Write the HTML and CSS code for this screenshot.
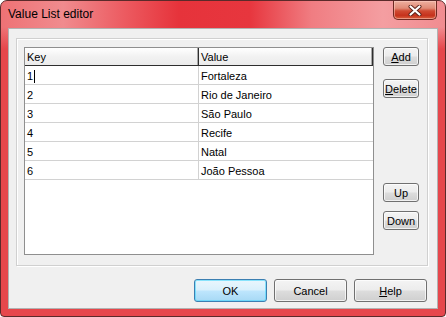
FILE: index.html
```html
<!DOCTYPE html>
<html lang="en">

<head>
    <meta charset="UTF-8">
    <title>Value List editor</title>
    <link rel="stylesheet" href="styles.css">
</head>

<body>
    <div class="window">
        <div class="titlebar">
            <span class="title">Value List editor</span>
            <button class="close">
                <svg width="14" height="11" viewBox="0 0 14 11">
                    <path d="M2.5 1.5 L11.5 9.5 M11.5 1.5 L2.5 9.5" stroke="#5a2018" stroke-width="4" stroke-linecap="round" />
                    <path d="M2.5 1.5 L11.5 9.5 M11.5 1.5 L2.5 9.5" stroke="#ffffff" stroke-width="2.2" stroke-linecap="round" />
                </svg>
            </button>
        </div>
        <div class="client">
            <div class="group">
                <div class="grid">
                    <div class="grid-head">
                        <div class="head-cell">Key</div>
                        <div class="head-cell">Value</div>
                    </div>
                    <div class="grid-row">
                        <div class="cell key">1<span class="caret"></span></div>
                        <div class="cell">Fortaleza</div>
                    </div>
                    <div class="grid-row">
                        <div class="cell key">2</div>
                        <div class="cell">Rio de Janeiro</div>
                    </div>
                    <div class="grid-row">
                        <div class="cell key">3</div>
                        <div class="cell">São Paulo</div>
                    </div>
                    <div class="grid-row">
                        <div class="cell key">4</div>
                        <div class="cell">Recife</div>
                    </div>
                    <div class="grid-row">
                        <div class="cell key">5</div>
                        <div class="cell">Natal</div>
                    </div>
                    <div class="grid-row">
                        <div class="cell key">6</div>
                        <div class="cell">João Pessoa</div>
                    </div>
                </div>
                <div class="side">
                    <button class="btn small"><u>A</u>dd</button>
                    <button class="btn small delete"><u>D</u>elete</button>
                    <button class="btn small up">Up</button>
                    <button class="btn small down">Down</button>
                </div>
            </div>
            <div class="actions">
                <button class="btn wide default">OK</button>
                <button class="btn wide">Cancel</button>
                <button class="btn wide"><u>H</u>elp</button>
            </div>
        </div>
    </div>
</body>

</html>
```

FILE: styles.css
```css
* {
    box-sizing: border-box;
}

body {
    margin: 0;
    padding: 0;
    background-color: #ffffff;
    font-family: "Liberation Sans", Arial, sans-serif;
}

.window {
    width: 446px;
    height: 317px;
    display: flex;
    flex-direction: column;
    padding: 0 7px 7px 7px;
    border: 1px solid #5b2a2a;
    border-radius: 7px 7px 4px 4px;
    background:
        linear-gradient(to bottom, rgba(232, 72, 76, 0) 0, rgba(232, 72, 76, 0) 26px, #e6474c 48px, #e6474c 100%),
        linear-gradient(90deg, #ee7275 0%, #f08b8e 14%, #ec5a60 28%, #e6333b 40%, #e7363e 56%, #f07d82 70%, #f49ea1 86%, #f18c90 100%);
}

.titlebar {
    height: 27px;
    display: flex;
    justify-content: space-between;
    align-items: flex-start;
}

.title {
    margin-top: 6px;
    font-size: 12px;
    line-height: 15px;
    color: #000000;
}

.close {
    width: 44px;
    height: 19px;
    margin-right: 1px;
    padding: 0;
    display: flex;
    align-items: center;
    justify-content: center;
    border: 1px solid #6e2a22;
    border-top: none;
    border-radius: 0 0 5px 5px;
    background: linear-gradient(to bottom, #eeb0a0 0%, #e08a76 40%, #cf4a32 55%, #c6321c 80%, #d8603e 100%);
    box-shadow: inset 0 0 0 1px rgba(255, 210, 200, 0.5);
}

.client {
    flex: 1;
    display: flex;
    flex-direction: column;
    padding: 9px 9px 0 7px;
    border: 1px solid #b2b2b2;
    background-color: #f0f0f0;
}

.group {
    height: 228px;
    display: flex;
    padding: 8px 9px 10px 7px;
    border: 1px solid #d0d0d0;
    box-shadow: inset 1px 1px 0 #ffffff, 1px 1px 0 #ffffff;
}

.grid {
    width: 350px;
    height: 208px;
    border: 1px solid #8f8f8f;
    background-color: #ffffff;
    font-size: 11px;
    color: #000000;
}

.grid-head,
.grid-row {
    display: grid;
    grid-template-columns: 174px 174px;
}

.grid-head {
    height: 18px;
    border-bottom: 1px solid #2e2e2e;
    background: linear-gradient(to bottom, #ffffff 0%, #f2f2f2 50%, #ebebeb 100%);
}

.head-cell {
    padding: 2px 0 0 2px;
    line-height: 14px;
    border-right: 1px solid #2e2e2e;
    box-shadow: inset -1px 0 0 #a8a8a8;
}

.grid-row {
    height: 19px;
    border-bottom: 1px solid #d2d2d2;
}

.cell {
    padding: 3px 0 0 2px;
    line-height: 14px;
    white-space: nowrap;
}

.cell.key {
    border-right: 1px solid #d2d2d2;
}

.caret {
    display: inline-block;
    width: 1px;
    height: 13px;
    margin-left: 1px;
    vertical-align: -3px;
    background-color: #000000;
}

.side {
    display: flex;
    flex-direction: column;
    margin-left: 9px;
}

.btn {
    padding: 0;
    font-family: "Liberation Sans", Arial, sans-serif;
    font-size: 11px;
    color: #000000;
    border: 1px solid #707070;
    border-radius: 3px;
    background: linear-gradient(to bottom, #f4f4f4 0%, #ececec 48%, #dddddd 52%, #cfcfcf 100%);
    box-shadow: inset 0 0 0 1px rgba(255, 255, 255, 0.7);
}

.btn.small {
    width: 36px;
    height: 19px;
}

.btn.delete {
    margin-top: 13px;
}

.btn.up {
    margin-top: 85px;
}

.btn.down {
    margin-top: 9px;
}

.actions {
    display: flex;
    justify-content: flex-end;
    gap: 7px;
    margin-top: 13px;
    padding-right: 1px;
}

.btn.wide {
    width: 73px;
    height: 23px;
}

.btn.default {
    border-color: #3c7fb1;
    background: linear-gradient(to bottom, #eaf6fd 0%, #d9f0fc 48%, #bee6fd 52%, #a7d9f5 100%);
    box-shadow: inset 0 0 0 1px rgba(72, 215, 251, 0.6);
}
```
